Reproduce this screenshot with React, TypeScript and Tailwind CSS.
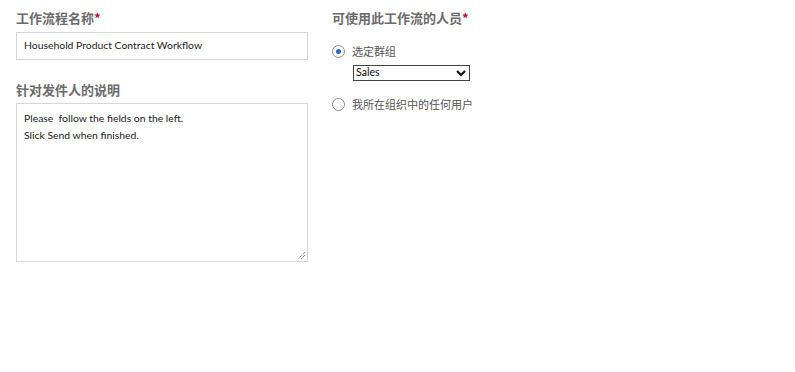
import React from "react";

const font = { fontFamily: 'Lato, "Noto Sans CJK SC", sans-serif' };
const cjk = { fontFamily: '"Noto Sans CJK SC", sans-serif' };

function Radio({ checked }: { checked?: boolean }) {
  return (
    <span className="w-[13px] h-[13px] rounded-full border border-[#8a8a8a] bg-white flex items-center justify-center shrink-0">
      {checked && <span className="w-[5px] h-[5px] rounded-full bg-[#2b6cc4]" />}
    </span>
  );
}

export default function App() {
  return (
    <div className="w-[795px] h-[372px] bg-white flex gap-[24px] pl-[16px] pt-[9px] text-[#333]" style={font}>
      <div className="w-[292px] flex flex-col">
        <div className="text-[13px] font-bold text-[#6b6b6b] leading-[18px]" style={cjk}>
          工作流程名称<span className="text-[#c8102e]">*</span>
        </div>
        <div className="mt-[5px] h-[28px] border border-[#d6d6d6] flex items-center px-[7px] text-[10.4px] text-[#222]">
          Household Product Contract Workflow
        </div>
        <div className="mt-[21px] text-[13px] font-bold text-[#6b6b6b] leading-[18px]" style={cjk}>针对发件人的说明</div>
        <div className="relative mt-[4px] h-[159px] border border-[#d6d6d6] px-[7px] pt-[6px] text-[10.4px] leading-[17px] text-[#222]">
          <div>Please&nbsp; follow the fields on the left.</div>
          <div>Slick Send when finished.</div>
          <svg className="absolute right-[1px] bottom-[1px]" width="9" height="9" viewBox="0 0 9 9">
            <path d="M8 1 L1 8 M8 4 L4 8" stroke="#555" strokeWidth="1" strokeDasharray="1 1" />
          </svg>
        </div>
      </div>
      <div className="flex flex-col">
        <div className="text-[13px] font-bold text-[#6b6b6b] leading-[18px]" style={cjk}>
          可使用此工作流的人员<span className="text-[#c8102e]">*</span>
        </div>
        <div className="mt-[16px] h-[16px] flex items-center gap-[7px] text-[11px] text-[#555]" style={cjk}>
          <Radio checked />
          <span>选定群组</span>
        </div>
        <div className="mt-[6px] ml-[21px] w-[117px] h-[16px] border border-[#444] flex items-center justify-between px-[2px] text-[10.6px] text-[#111]">
          <span>Sales</span>
          <svg width="10" height="7" viewBox="0 0 10 7" className="mr-[1px]">
            <path d="M1 1 L5 5 L9 1" stroke="#111" strokeWidth="2.2" fill="none" />
          </svg>
        </div>
        <div className="mt-[15px] h-[16px] flex items-center gap-[7px] text-[11px] text-[#555]" style={cjk}>
          <Radio />
          <span>我所在组织中的任何用户</span>
        </div>
      </div>
    </div>
  );
}
